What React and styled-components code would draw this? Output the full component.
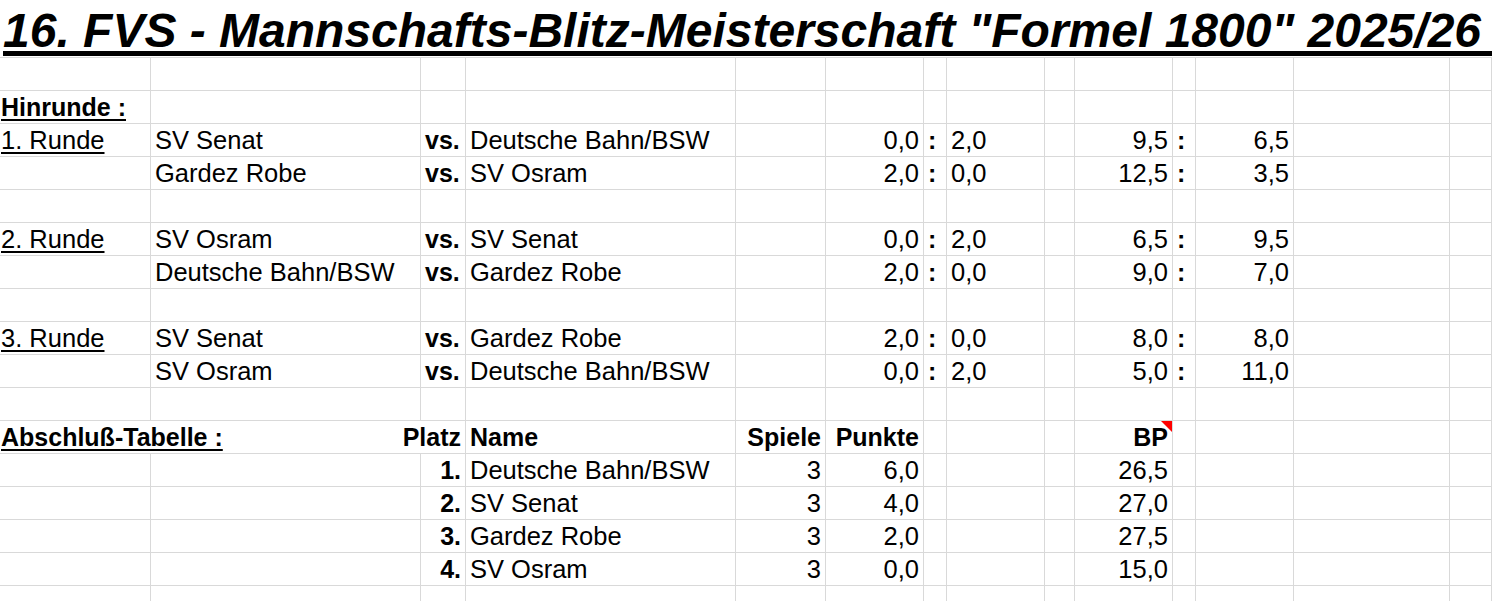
import styled, { createGlobalStyle } from "styled-components";

const GlobalStyle = createGlobalStyle`
    html, body {
        margin: 0;
        padding: 0;
        background: #ffffff;
    }
`

const COLS = "151px 270px 45px 270px 90px 98px 23px 98px 30px 98px 23px 98px 156px 1fr";

const Sheet = styled.div`
    display: flex;
    flex-direction: column;
    width: 1492px;
    overflow: hidden;
    font-family: "Liberation Sans", Arial, sans-serif;
    font-size: 25.5px;
    color: #000000;
    background: #ffffff;
`

const TitleRow = styled.div`
    height: 58px;
    border-bottom: 1px solid #d9d9d9;
    box-sizing: border-box;
    display: flex;
    align-items: flex-start;
`

const Title = styled.h1`
    flex: 1;
    margin: 0 0 0 3px;
    padding-top: 10px;
    height: 41px;
    line-height: 41px;
    font-size: 48px;
    font-weight: bold;
    font-style: italic;
    white-space: nowrap;
    border-bottom: 5px solid #000000;
`

const Row = styled.div`
    display: grid;
    grid-template-columns: ${COLS};
    height: 33px;
`

const Cell = styled.div`
    grid-column: span ${p => p.$span || 1};
    position: relative;
    box-sizing: border-box;
    border-right: 1px solid #d9d9d9;
    border-bottom: 1px solid #d9d9d9;
    padding: 1px ${p => p.$right ? "4px" : "0"} 0 ${p => p.$first ? "1px" : p.$right ? "0" : "4px"};
    line-height: 31px;
    white-space: nowrap;
    text-align: ${p => p.$right ? "right" : "left"};
    font-weight: ${p => p.$bold ? "bold" : "normal"};
    font-size: ${p => p.$bold ? "25px" : "inherit"};
    display: ${p => p.$split ? "flex" : "block"};
    justify-content: space-between;
`

const Label = styled.span`
    text-decoration: underline;
    text-decoration-thickness: 2px;
    text-underline-offset: 3px;
`

const Note = styled.span`
    position: absolute;
    top: 0;
    right: 0;
    width: 0;
    height: 0;
    border-top: 11px solid #ff0000;
    border-left: 11px solid transparent;
`

const Pad = ({ n }) => Array.from({ length: n }, (_, i) => <Cell key={"p" + i} />)

const rounds = [
    {
        label: "1. Runde",
        games: [
            ["SV Senat", "Deutsche Bahn/BSW", "0,0", "2,0", "9,5", "6,5"],
            ["Gardez Robe", "SV Osram", "2,0", "0,0", "12,5", "3,5"],
        ],
    },
    {
        label: "2. Runde",
        games: [
            ["SV Osram", "SV Senat", "0,0", "2,0", "6,5", "9,5"],
            ["Deutsche Bahn/BSW", "Gardez Robe", "2,0", "0,0", "9,0", "7,0"],
        ],
    },
    {
        label: "3. Runde",
        games: [
            ["SV Senat", "Gardez Robe", "2,0", "0,0", "8,0", "8,0"],
            ["SV Osram", "Deutsche Bahn/BSW", "0,0", "2,0", "5,0", "11,0"],
        ],
    },
]

const tabelle = [
    ["1.", "Deutsche Bahn/BSW", "3", "6,0", "26,5"],
    ["2.", "SV Senat", "3", "4,0", "27,0"],
    ["3.", "Gardez Robe", "3", "2,0", "27,5"],
    ["4.", "SV Osram", "3", "0,0", "15,0"],
]

function EmptyRow() {
    return (
        <Row>
            <Pad n={14} />
        </Row>
    )
}

function GameRow({ label, game }) {
    const [heim, gast, mp1, mp2, bp1, bp2] = game
    return (
        <Row>
            <Cell $first>{label && <Label>{label}</Label>}</Cell>
            <Cell>{heim}</Cell>
            <Cell $bold>vs.</Cell>
            <Cell>{gast}</Cell>
            <Cell />
            <Cell $right>{mp1}</Cell>
            <Cell $bold>:</Cell>
            <Cell>{mp2}</Cell>
            <Cell />
            <Cell $right>{bp1}</Cell>
            <Cell $bold>:</Cell>
            <Cell $right>{bp2}</Cell>
            <Cell />
            <Cell />
        </Row>
    )
}

function App() {
    return (
        <>
            <GlobalStyle />
            <Sheet>
                <TitleRow>
                    <Title>16. FVS - Mannschafts-Blitz-Meisterschaft "Formel 1800" 2025/26</Title>
                </TitleRow>

                <EmptyRow />

                <Row>
                    <Cell $first $bold><Label>Hinrunde :</Label></Cell>
                    <Pad n={13} />
                </Row>

                {rounds.map((runde, r) => (
                    <div key={r}>
                        {runde.games.map((game, g) => (
                            <GameRow key={g} label={g === 0 ? runde.label : null} game={game} />
                        ))}
                        <EmptyRow />
                    </div>
                ))}

                <Row>
                    <Cell $span={3} $first $bold $split>
                        <Label>Abschluß-Tabelle :</Label>
                        <span style={{ paddingRight: 4 }}>Platz</span>
                    </Cell>
                    <Cell $bold>Name</Cell>
                    <Cell $bold $right>Spiele</Cell>
                    <Cell $bold $right>Punkte</Cell>
                    <Cell />
                    <Cell />
                    <Cell />
                    <Cell $bold $right>BP<Note /></Cell>
                    <Pad n={4} />
                </Row>

                {tabelle.map((team, i) => (
                    <Row key={i}>
                        <Cell />
                        <Cell />
                        <Cell $bold $right>{team[0]}</Cell>
                        <Cell>{team[1]}</Cell>
                        <Cell $right>{team[2]}</Cell>
                        <Cell $right>{team[3]}</Cell>
                        <Cell />
                        <Cell />
                        <Cell />
                        <Cell $right>{team[4]}</Cell>
                        <Pad n={4} />
                    </Row>
                ))}

                <EmptyRow />
            </Sheet>
        </>
    )
}

export default App
